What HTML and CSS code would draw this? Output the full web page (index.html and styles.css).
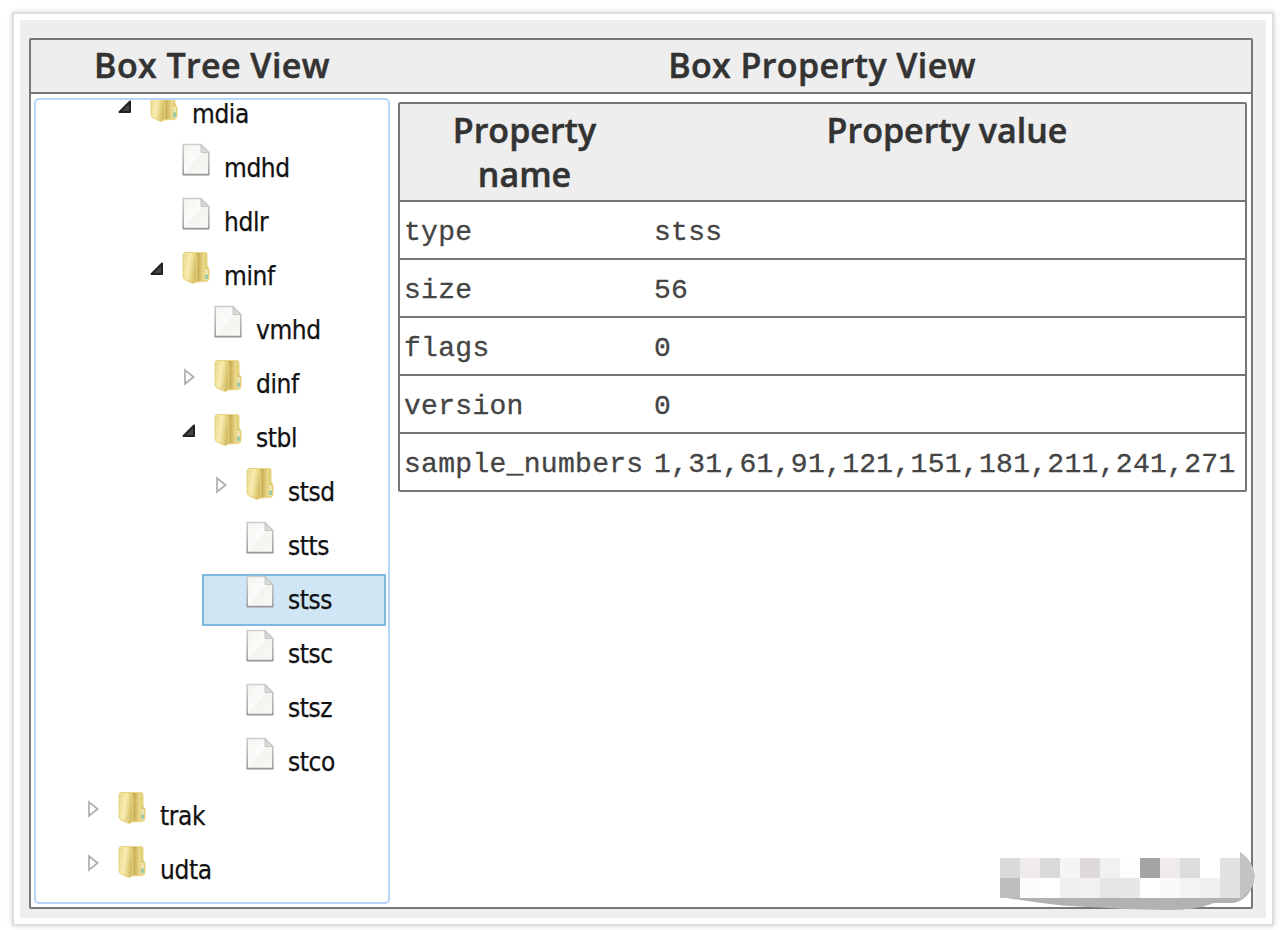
FILE: index.html
```
<!DOCTYPE html>
<html lang="en">
<head>
<meta charset="utf-8">
<title>Box Tree View</title>
<link rel="stylesheet" href="styles.css">
</head>
<body>
<svg class="defs" aria-hidden="true">
  <defs>
    <linearGradient id="paper" x1="0" y1="0" x2="1" y2="1"><stop offset="0" stop-color="#f1f4ee"/><stop offset=".48" stop-color="#fcfdfb"/><stop offset=".52" stop-color="#f3f5f0"/><stop offset="1" stop-color="#f7f8f5"/></linearGradient>
    <linearGradient id="edge" x1="0" y1="0" x2="0" y2="1"><stop offset="0" stop-color="#cfcfcf"/><stop offset="1" stop-color="#a2a2a2"/></linearGradient>
    <linearGradient id="front" x1="0" y1="0" x2="1" y2=".3"><stop offset="0" stop-color="#e9d98a"/><stop offset=".5" stop-color="#f8edb0"/><stop offset="1" stop-color="#d5bd62"/></linearGradient>
    <linearGradient id="back" x1="0" y1="0" x2="1" y2="0"><stop offset="0" stop-color="#b99a45"/><stop offset=".4" stop-color="#c9ad58"/><stop offset=".7" stop-color="#ecda8c"/><stop offset="1" stop-color="#d8bd58"/></linearGradient>
    <symbol id="doc" viewBox="0 0 28 34"><path d="M1.200 1.500H19L26.800 9.500V31.500H1.200Z" fill="url(#paper)" stroke="url(#edge)" stroke-width="1.600"/><path d="M19 1.500V9.500H26.800Z" fill="#d9d9d9" stroke="#c4c4c4"/><path d="M1 31.700H27" stroke="#999" stroke-width="1.400"/></symbol>
    <symbol id="folder" viewBox="0 0 28 34"><path d="M9 1.500H23Q25 1.500 25 3.500V15L27 18V27Q27 30 24 30.500L13 31Z" fill="url(#back)" stroke="#ead687"/><path d="M1 4Q1 1.500 4 1.500H11Q15 2 15 6V29Q14 32 11 32.500L3 29Q1 28 1 26Z" fill="url(#front)" stroke="#e7d37d"/><path d="M24.500 18V29" stroke="#efe8b8" stroke-width="2.500"/><path d="M24.500 23.500V28" stroke="#8fc3ac" stroke-width="2.500"/></symbol>
    <symbol id="open" viewBox="0 0 14 18"><path d="M12 3.500V14H1.500Z" fill="#444" stroke="#222" stroke-width="2" stroke-linejoin="round"/></symbol>
    <symbol id="closed" viewBox="0 0 14 18"><path d="M3 2.200V15.800L11.600 9Z" fill="#fff" stroke="#b2b2b2" stroke-width="1.800"/></symbol>
  </defs>
</svg>
<div class="card">
  <div class="stage">
    <div class="viewer">
      <div class="heads"><h1>Box Tree View</h1><h1>Box Property View</h1></div>
      <div class="panes">
        <ul class="tree">
          <li class="node l2"><svg class="arrow"><use href="#open"/></svg><svg class="icon"><use href="#folder"/></svg><span>mdia</span></li>
          <li class="node l3"><i class="arrow"></i><svg class="icon"><use href="#doc"/></svg><span>mdhd</span></li>
          <li class="node l3"><i class="arrow"></i><svg class="icon"><use href="#doc"/></svg><span>hdlr</span></li>
          <li class="node l3"><svg class="arrow"><use href="#open"/></svg><svg class="icon"><use href="#folder"/></svg><span>minf</span></li>
          <li class="node l4"><i class="arrow"></i><svg class="icon"><use href="#doc"/></svg><span>vmhd</span></li>
          <li class="node l4"><svg class="arrow"><use href="#closed"/></svg><svg class="icon"><use href="#folder"/></svg><span>dinf</span></li>
          <li class="node l4"><svg class="arrow"><use href="#open"/></svg><svg class="icon"><use href="#folder"/></svg><span>stbl</span></li>
          <li class="node l5"><svg class="arrow"><use href="#closed"/></svg><svg class="icon"><use href="#folder"/></svg><span>stsd</span></li>
          <li class="node l5"><i class="arrow"></i><svg class="icon"><use href="#doc"/></svg><span>stts</span></li>
          <li class="node selected"><svg class="icon"><use href="#doc"/></svg><span>stss</span></li>
          <li class="node l5"><i class="arrow"></i><svg class="icon"><use href="#doc"/></svg><span>stsc</span></li>
          <li class="node l5"><i class="arrow"></i><svg class="icon"><use href="#doc"/></svg><span>stsz</span></li>
          <li class="node l5"><i class="arrow"></i><svg class="icon"><use href="#doc"/></svg><span>stco</span></li>
          <li class="node l1"><svg class="arrow"><use href="#closed"/></svg><svg class="icon"><use href="#folder"/></svg><span>trak</span></li>
          <li class="node l1"><svg class="arrow"><use href="#closed"/></svg><svg class="icon"><use href="#folder"/></svg><span>udta</span></li>
        </ul>
        <div class="props">
          <div class="row head"><h2>Property<br>name</h2><h2>Property value</h2></div>
          <div class="row"><span>type</span><span>stss</span></div>
          <div class="row"><span>size</span><span>56</span></div>
          <div class="row"><span>flags</span><span>0</span></div>
          <div class="row"><span>version</span><span>0</span></div>
          <div class="row"><span>sample_numbers</span><span>1,31,61,91,121,151,181,211,241,271</span></div>
        </div>
      </div>
    </div>
  </div>
</div>
<svg class="mosaic" viewBox="0 0 256 60">
  <path d="M240 0C249 6 254 15 254.500 24C254 39 244 50 232 51H214C198 57 188 58 165 58L125 57L62 53.500L34 50L0 45V40H240Z" fill="#b2b2b2"/>
  <path d="M240 0C249 6 254 15 254.500 24C254 35 248 42 240 47Z" fill="#c3c3c3"/>
  <g shape-rendering="crispEdges">
    <path d="M0 6h240v40H0z" fill="#fff"/>
    <path d="M0 6h20v20H0z" fill="#dadada"/><path d="M20 6h20v20H20z" fill="#efebed"/><path d="M40 6h20v20H40z" fill="#dadada"/><path d="M60 6h20v20H60z" fill="#f5f5f5"/><path d="M80 6h20v20H80z" fill="#dedadc"/><path d="M100 6h20v20h-20z" fill="#f1f1f1"/><path d="M120 6h20v20h-20z" fill="#fdfdfd"/><path d="M140 6h20v20h-20z" fill="#a4a4a4"/><path d="M160 6h20v20h-20z" fill="#efebed"/><path d="M180 6h20v20h-20z" fill="#dcdcdc"/><path d="M220 6h20v20h-20z" fill="#e2e2e2"/>
    <path d="M0 26h20v20H0z" fill="#bebebe"/><path d="M20 26h20v20H20z" fill="#fcfcfc"/><path d="M60 26h20v20H60z" fill="#efefef"/><path d="M80 26h20v20H80z" fill="#f1f1f1"/><path d="M100 26h20v20h-20z" fill="#e5e5e5"/><path d="M120 26h20v20h-20z" fill="#e7e7e7"/><path d="M160 26h20v20h-20z" fill="#fafafa"/><path d="M180 26h20v20h-20z" fill="#f4f4f4"/><path d="M200 26h20v20h-20z" fill="#efefef"/><path d="M220 26h20v20h-20z" fill="#e2e2e2"/>
  </g>
</svg>
</body>
</html>
```
FILE: styles.css
```
* { box-sizing: border-box; }
body { margin: 0; width: 1284px; height: 930px; padding: 12px 10px 4px 12px; overflow: hidden; background: #fff; }
h1, h2, ul { margin: 0; padding: 0; }
.defs { position: absolute; width: 0; height: 0; }
.card { width: 1262px; height: 914px; padding: 6px; border: 2px solid #ddd; background: #fff; box-shadow: 0 0 6px rgba(0,0,0,.16); }
.stage { height: 898px; padding: 18px 13px 9px 9px; background: #eee; }
.viewer { height: 871px; border: 2px solid #777; border-radius: 2px; display: flex; flex-direction: column; }
.heads { height: 54px; flex: none; display: grid; grid-template-columns: 362px 1fr; border-bottom: 2px solid #777; }
h1, h2 { font: 600 34px/44px "Open Sans", sans-serif; color: #333; text-align: center; -webkit-text-stroke: .5px #333; }
h1 { line-height: 51px; letter-spacing: .4px; white-space: nowrap; }
.panes { flex: 1; min-height: 0; display: flex; align-items: flex-start; gap: 8px; padding: 4px 4px 3px 3px; background: #fff; }
.tree { width: 356px; height: 806px; flex: none; overflow: hidden; border: 2px solid #b5d5fa; border-radius: 5px; list-style: none; }
.node { height: 54px; display: flex; align-items: flex-start; font: 26px/52px "DejaVu Sans Condensed", "DejaVu Sans", sans-serif; font-stretch: condensed; letter-spacing: -.4px; color: #111; -webkit-text-stroke: .25px #111; }
.node:first-child { margin-top: -12px; }
.arrow { width: 14px; height: 18px; flex: none; margin: 10px 18px 0 0; }
.icon { width: 28px; height: 34px; flex: none; margin: 1px 14px 0 0; }
.l1 { padding-left: 50px; }
.l2 { padding-left: 82px; }
.l3 { padding-left: 114px; }
.l4 { padding-left: 146px; }
.l5 { padding-left: 178px; }
.selected { width: 184px; height: 52px; margin: 0 0 2px 166px; padding-left: 42px; border: 2px solid #7cb8e0; background: #d1e6f4; line-height: 48px; }
.selected .icon { margin-top: -1px; }
.props { flex: 1; min-width: 0; margin-top: 4px; border: 2px solid #777; border-radius: 2px; }
.row { height: 58px; display: grid; grid-template-columns: 249px 1fr; border-bottom: 2px solid #777; font: 28px/61px "Liberation Mono", monospace; letter-spacing: .3px; color: #444; -webkit-text-stroke: .3px #444; }
.row span { height: 56px; padding-left: 5px; white-space: nowrap; }
.row span:first-child { padding-left: 4px; }
.row:last-child { height: 56px; border-bottom: 0; }
.head { height: 98px; padding-top: 4px; background: #eee; letter-spacing: 0; }
.mosaic { position: absolute; left: 1000px; top: 852px; width: 256px; height: 60px; }
```
